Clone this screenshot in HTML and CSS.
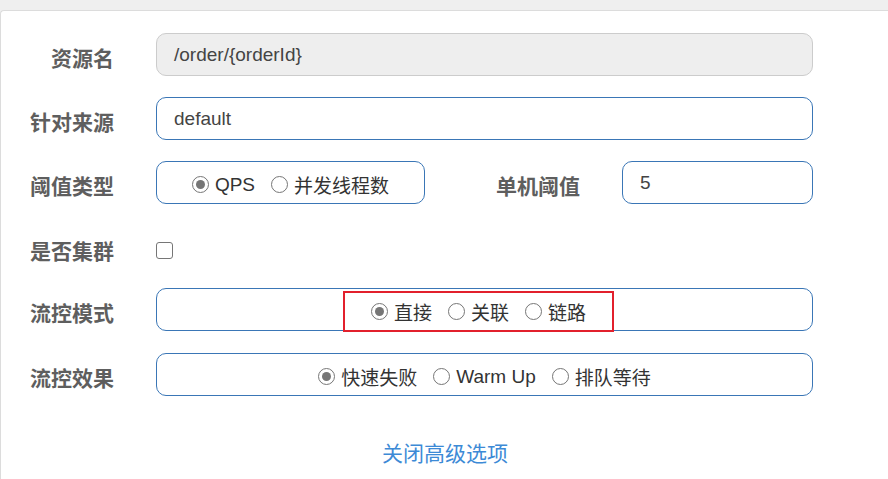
FILE: index.html
```html
<!DOCTYPE html>
<html lang="zh-CN">
<head>
<meta charset="utf-8">
<title>流控规则</title>
<link rel="stylesheet" href="styles.css">
</head>
<body>
<div class="panel">
  <form class="form">
    <div class="row">
      <label class="label">资源名</label>
      <div class="field readonly">/order/{orderId}</div>
    </div>
    <div class="row">
      <label class="label">针对来源</label>
      <div class="field">default</div>
    </div>
    <div class="row">
      <label class="label">阈值类型</label>
      <div class="field radios short">
        <span class="radio"><span class="dot checked"></span>QPS</span>
        <span class="radio"><span class="dot"></span>并发线程数</span>
      </div>
      <label class="label label2">单机阈值</label>
      <div class="field num">5</div>
    </div>
    <div class="row check-row">
      <label class="label">是否集群</label>
      <span class="checkbox"></span>
    </div>
    <div class="row mode-row">
      <label class="label">流控模式</label>
      <div class="field radios wide mode">
        <span class="radio"><span class="dot checked"></span>直接</span>
        <span class="radio"><span class="dot"></span>关联</span>
        <span class="radio"><span class="dot"></span>链路</span>
        <span class="highlight"></span>
      </div>
    </div>
    <div class="row">
      <label class="label">流控效果</label>
      <div class="field radios wide">
        <span class="radio"><span class="dot checked"></span>快速失败</span>
        <span class="radio"><span class="dot"></span>Warm Up</span>
        <span class="radio"><span class="dot"></span>排队等待</span>
      </div>
    </div>
    <div class="link-row">
      <a class="toggle">关闭高级选项</a>
    </div>
  </form>
</div>
</body>
</html>
```
FILE: styles.css
```css
html, body {
  margin: 0;
  padding: 0;
}
body {
  background: #efefef;
  font-family: "Liberation Sans", Arial, "Noto Sans CJK SC", sans-serif;
  color: #333;
  width: 888px;
  height: 479px;
  overflow: hidden;
}
.panel {
  margin-top: 10px;
  width: 900px;
  height: 480px;
  background: #fff;
  border: 1px solid #dcdcdc;
  border-right: none;
  border-radius: 4px 0 0 0;
  box-sizing: border-box;
}
.form {
  padding-top: 22px;
}
.row {
  display: flex;
  align-items: center;
  height: 43px;
  margin-bottom: 21px;
}
.mode-row {
  margin-bottom: 22px;
}
.check-row {
  height: 42px;
  align-items: flex-end;
}
.label {
  width: 113px;
  flex: none;
  text-align: right;
  font-family: "Liberation Sans", "Noto Sans CJK SC", sans-serif;
  font-weight: bold;
  font-size: 21px;
  color: #5e5e5e;
  margin-right: 42px;
  position: relative;
  top: 2px;
}
.check-row .label {
  top: -1px;
  line-height: 28px;
}
.label2 {
  width: 155px;
}
.field {
  position: relative;
  box-sizing: border-box;
  width: 657px;
  height: 43px;
  border: 1px solid #3a76b6;
  border-radius: 10px;
  padding: 0 17px;
  display: flex;
  align-items: center;
  font-size: 19px;
  color: #444;
}
.readonly {
  background: #eeeeee;
  border-color: #cccccc;
}
.short {
  width: 269px;
}
.num {
  width: 191px;
}
.radios {
  justify-content: center;
  gap: 16px;
  padding: 4px 0 0 0;
  color: #333;
}
.radios.mode {
  padding-right: 12px;
}
.radio {
  display: inline-flex;
  align-items: center;
  gap: 6px;
  font-size: 19px;
}
.dot {
  width: 17px;
  height: 17px;
  box-sizing: border-box;
  border: 1.5px solid #767676;
  border-radius: 50%;
  display: inline-flex;
  align-items: center;
  justify-content: center;
  flex: none;
}
.dot.checked::after {
  content: "";
  width: 9px;
  height: 9px;
  border-radius: 50%;
  background: #767676;
}
.checkbox {
  display: block;
  width: 17px;
  height: 17px;
  box-sizing: border-box;
  border: 1.5px solid #767676;
  border-radius: 3px;
  margin-bottom: 8px;
}
.highlight {
  position: absolute;
  left: 186px;
  top: 2px;
  width: 271px;
  height: 41px;
  box-sizing: border-box;
  border: 2px solid #e2202c;
}
.link-row {
  text-align: center;
  width: 888px;
  padding-top: 20px;
}
.toggle {
  font-family: "Liberation Sans", "Noto Sans CJK SC", sans-serif;
  font-size: 21px;
  color: #3d8ad6;
  cursor: pointer;
}
```
